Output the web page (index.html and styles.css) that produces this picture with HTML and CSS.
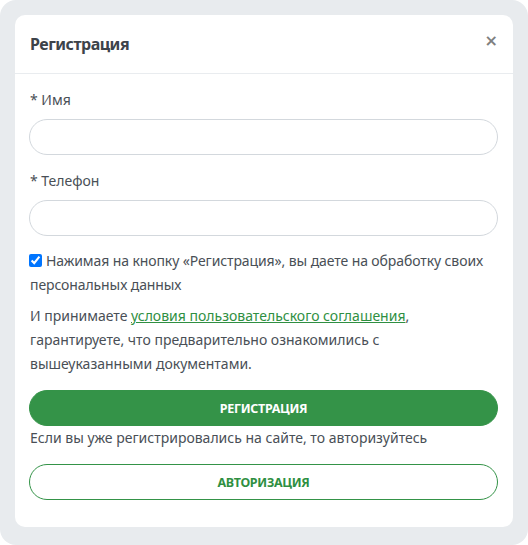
FILE: index.html
```html
<!DOCTYPE html>
<html lang="ru">
<head>
    <meta charset="UTF-8">
    <meta name="viewport" content="width=device-width, initial-scale=1.0">
    <title>Регистрация</title>
    <link rel="stylesheet" href="styles.css">
</head>
<body>
    <div class="frame">
        <div class="modal">
            <div class="modal-header">
                <h2>Регистрация</h2>
                <button type="button" class="close">&times;</button>
            </div>
            <form class="modal-body" id="regForm">
                <label for="userName">* Имя</label>
                <input type="text" id="userName" name="userName" required>

                <label for="userPhone">* Телефон</label>
                <input type="tel" id="userPhone" name="userPhone" required>

                <div class="agree"><input type="checkbox" id="agree" checked><label for="agree">Нажимая на кнопку «Регистрация», вы даете на обработку своих персональных данных</label></div>
                <p class="terms">И принимаете <a href="#">условия пользовательского соглашения</a>, гарантируете, что предварительно ознакомились с вышеуказанными документами.</p>

                <button type="submit" class="btn btn-green">Регистрация</button>
                <p class="note">Если вы уже регистрировались на сайте, то авторизуйтесь</p>
                <button type="button" class="btn btn-outline">Авторизация</button>
            </form>
        </div>
    </div>
</body>
</html>
```

FILE: styles.css
```css
body {
    margin: 0;
    background: #fff;
    font-family: "Noto Sans", "Open Sans", sans-serif;
    font-size: 14px;
    line-height: 24px;
    color: #494f56;
}
.frame {
    background: #e8ebee;
    border-radius: 16px;
    min-height: 545px;
    box-sizing: border-box;
    padding: 15px;
}
.modal {
    background: #fff;
    border-radius: 10px;
    width: 498px;
}
.modal-header {
    height: 58px;
    display: flex;
    align-items: center;
    justify-content: space-between;
    padding: 0 15px;
    border-bottom: 1px solid #e9ecef;
}
.modal-header h2 {
    margin: 0;
    font-size: 16px;
    font-weight: 700;
    color: #3d434a;
    letter-spacing: -0.5px;
}
.close {
    border: 0;
    background: none;
    padding: 0;
    font-family: "DejaVu Sans", sans-serif;
    font-size: 16px;
    font-weight: bold;
    line-height: 16px;
    color: #808080;
    margin-top: -6px;
    margin-right: 0;
    cursor: pointer;
}
.modal-body {
    display: flex;
    flex-direction: column;
    padding: 14px 15px 27px;
}
.modal-body > label {
    display: block;
    margin-bottom: 7px;
}
.modal-body input[type="text"],
.modal-body input[type="tel"] {
    height: 36px;
    box-sizing: border-box;
    border: 1px solid #d3d8dd;
    border-radius: 18px;
    padding: 0 15px;
    margin: 0 0 14px -1px;
    font: inherit;
}
.agree {
    margin-top: -1px;
    letter-spacing: -0.1px;
}
.agree input {
    margin: 0 4px 0 -1px;
    width: 13px;
    height: 13px;
    vertical-align: -1px;
}
.terms {
    margin: 7px 0 14px;
}
.terms a {
    color: #2f8f42;
}
.note {
    margin: 0 0 14px;
}
.btn {
    height: 36px;
    margin-left: -1px;
    border-radius: 18px;
    font-family: "Noto Sans", sans-serif;
    font-size: 12.5px;
    font-weight: 700;
    text-transform: uppercase;
    letter-spacing: -0.3px;
    cursor: pointer;
}
.btn-green {
    background: #349348;
    border: 1px solid #349348;
    color: #fff;
}
.btn-outline {
    background: #fff;
    border: 1px solid #349348;
    color: #2f8f42;
}
```
